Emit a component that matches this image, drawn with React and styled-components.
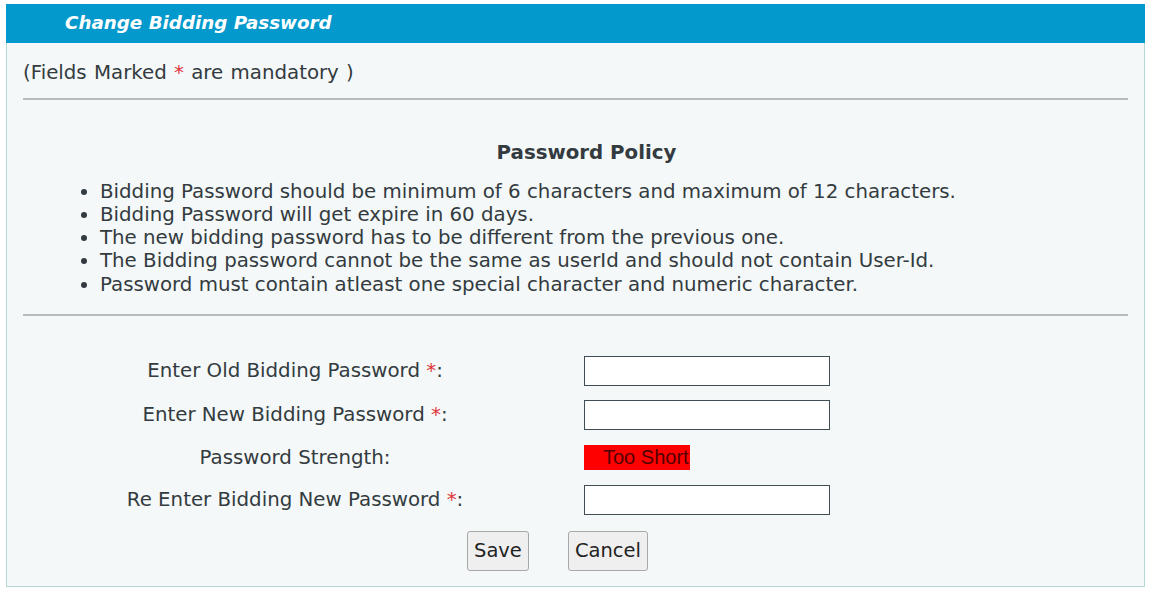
import styled, { createGlobalStyle } from 'styled-components';

const GlobalStyle = createGlobalStyle`
  html, body {
    margin: 0;
    padding: 0;
    background: #ffffff;
    font-family: "DejaVu Sans", Verdana, sans-serif;
    color: #333b40;
  }
`;

const rules = [
  'Bidding Password should be minimum of 6 characters and maximum of 12 characters.',
  'Bidding Password will get expire in 60 days.',
  'The new bidding password has to be different from the previous one.',
  'The Bidding password cannot be the same as userId and should not contain User-Id.',
  'Password must contain atleast one special character and numeric character.',
];

function App() {
  return (
    <>
      <GlobalStyle />
      <Panel>
        <PanelHeader>Change Bidding Password</PanelHeader>
        <PanelBody>
          <Note>
            (Fields Marked <Star>*</Star> are mandatory )
          </Note>
          <Rule $top={13} />
          <PolicyTitle>Password Policy</PolicyTitle>
          <PolicyList>
            {rules.map((r) => (
              <li key={r}>{r}</li>
            ))}
          </PolicyList>
          <Rule $top={18} />
          <Form>
            <Label>
              Enter Old Bidding Password <Star>*</Star>:
            </Label>
            <Field><Input type="password" /></Field>
            <Label>
              Enter New Bidding Password <Star>*</Star>:
            </Label>
            <Field><Input type="password" /></Field>
            <Label>Password Strength:</Label>
            <Field><Strength>Too Short</Strength></Field>
            <Label>
              Re Enter Bidding New Password <Star>*</Star>:
            </Label>
            <Field><Input type="password" /></Field>
          </Form>
          <Actions>
            <Button>Save</Button>
            <Button>Cancel</Button>
          </Actions>
        </PanelBody>
      </Panel>
    </>
  );
}

const Panel = styled.div`
  margin: 4px 11px 0 6px;
  border: 1px solid #b4d9d5;
  border-top: none;
  background: #f4f8f8;
  height: 583px;
  box-sizing: border-box;
`;

const PanelHeader = styled.div`
  background: #0499cc;
  height: 39px;
  line-height: 37px;
  padding-left: 59px;
  color: #fff;
  font-weight: bold;
  font-style: italic;
  font-size: 18.3px;
  margin: 0 -1px;
`;

const PanelBody = styled.div`
  padding: 0 16px;
  font-size: 19.8px;
`;

const Note = styled.div`
  padding-top: 18px;
  line-height: 24px;
  word-spacing: 1px;
`;

const Star = styled.span`
  color: #e0353b;
`;

const Rule = styled.hr`
  margin: ${(p) => p.$top}px 0 0;
  border: none;
  border-top: 2px solid #b8bcbc;
`;

const PolicyTitle = styled.div`
  text-align: center;
  font-weight: bold;
  line-height: 24px;
  margin-top: 41px;
  padding-left: 22px;
`;

const PolicyList = styled.ul`
  margin: 14.5px 0 0;
  padding-left: 77px;
  line-height: 23.3px;
`;

const Form = styled.div`
  display: grid;
  grid-template-columns: 544px 1fr;
  grid-template-rows: 44px 44px 42px 42px;
  column-gap: 17px;
  align-items: center;
  margin-top: 33px;
`;

const Label = styled.div`
  text-align: center;
`;

const Field = styled.div`
  display: flex;
  align-items: center;
`;

const Input = styled.input`
  width: 246px;
  height: 30px;
  box-sizing: border-box;
  border: 1px solid #3f4d57;
  background: #fff;
  padding: 2px 4px;
`;

const Strength = styled.div`
  width: 106px;
  height: 25px;
  box-sizing: border-box;
  background: #ff0000;
  color: #500000;
  font-family: "Liberation Sans", Arial, sans-serif;
  font-size: 20px;
  line-height: 25px;
  padding-left: 19px;
  white-space: nowrap;
  overflow: hidden;
`;

const Actions = styled.div`
  display: flex;
  gap: 39px;
  padding-left: 444px;
  margin-top: 10px;
`;

const Button = styled.button`
  height: 40px;
  padding: 0 6px;
  font-family: "DejaVu Sans", Verdana, sans-serif;
  font-size: 19.5px;
  color: #222;
  background: #efefef;
  border: 1px solid #a8a8a8;
  border-radius: 3px;
`;

export default App;
